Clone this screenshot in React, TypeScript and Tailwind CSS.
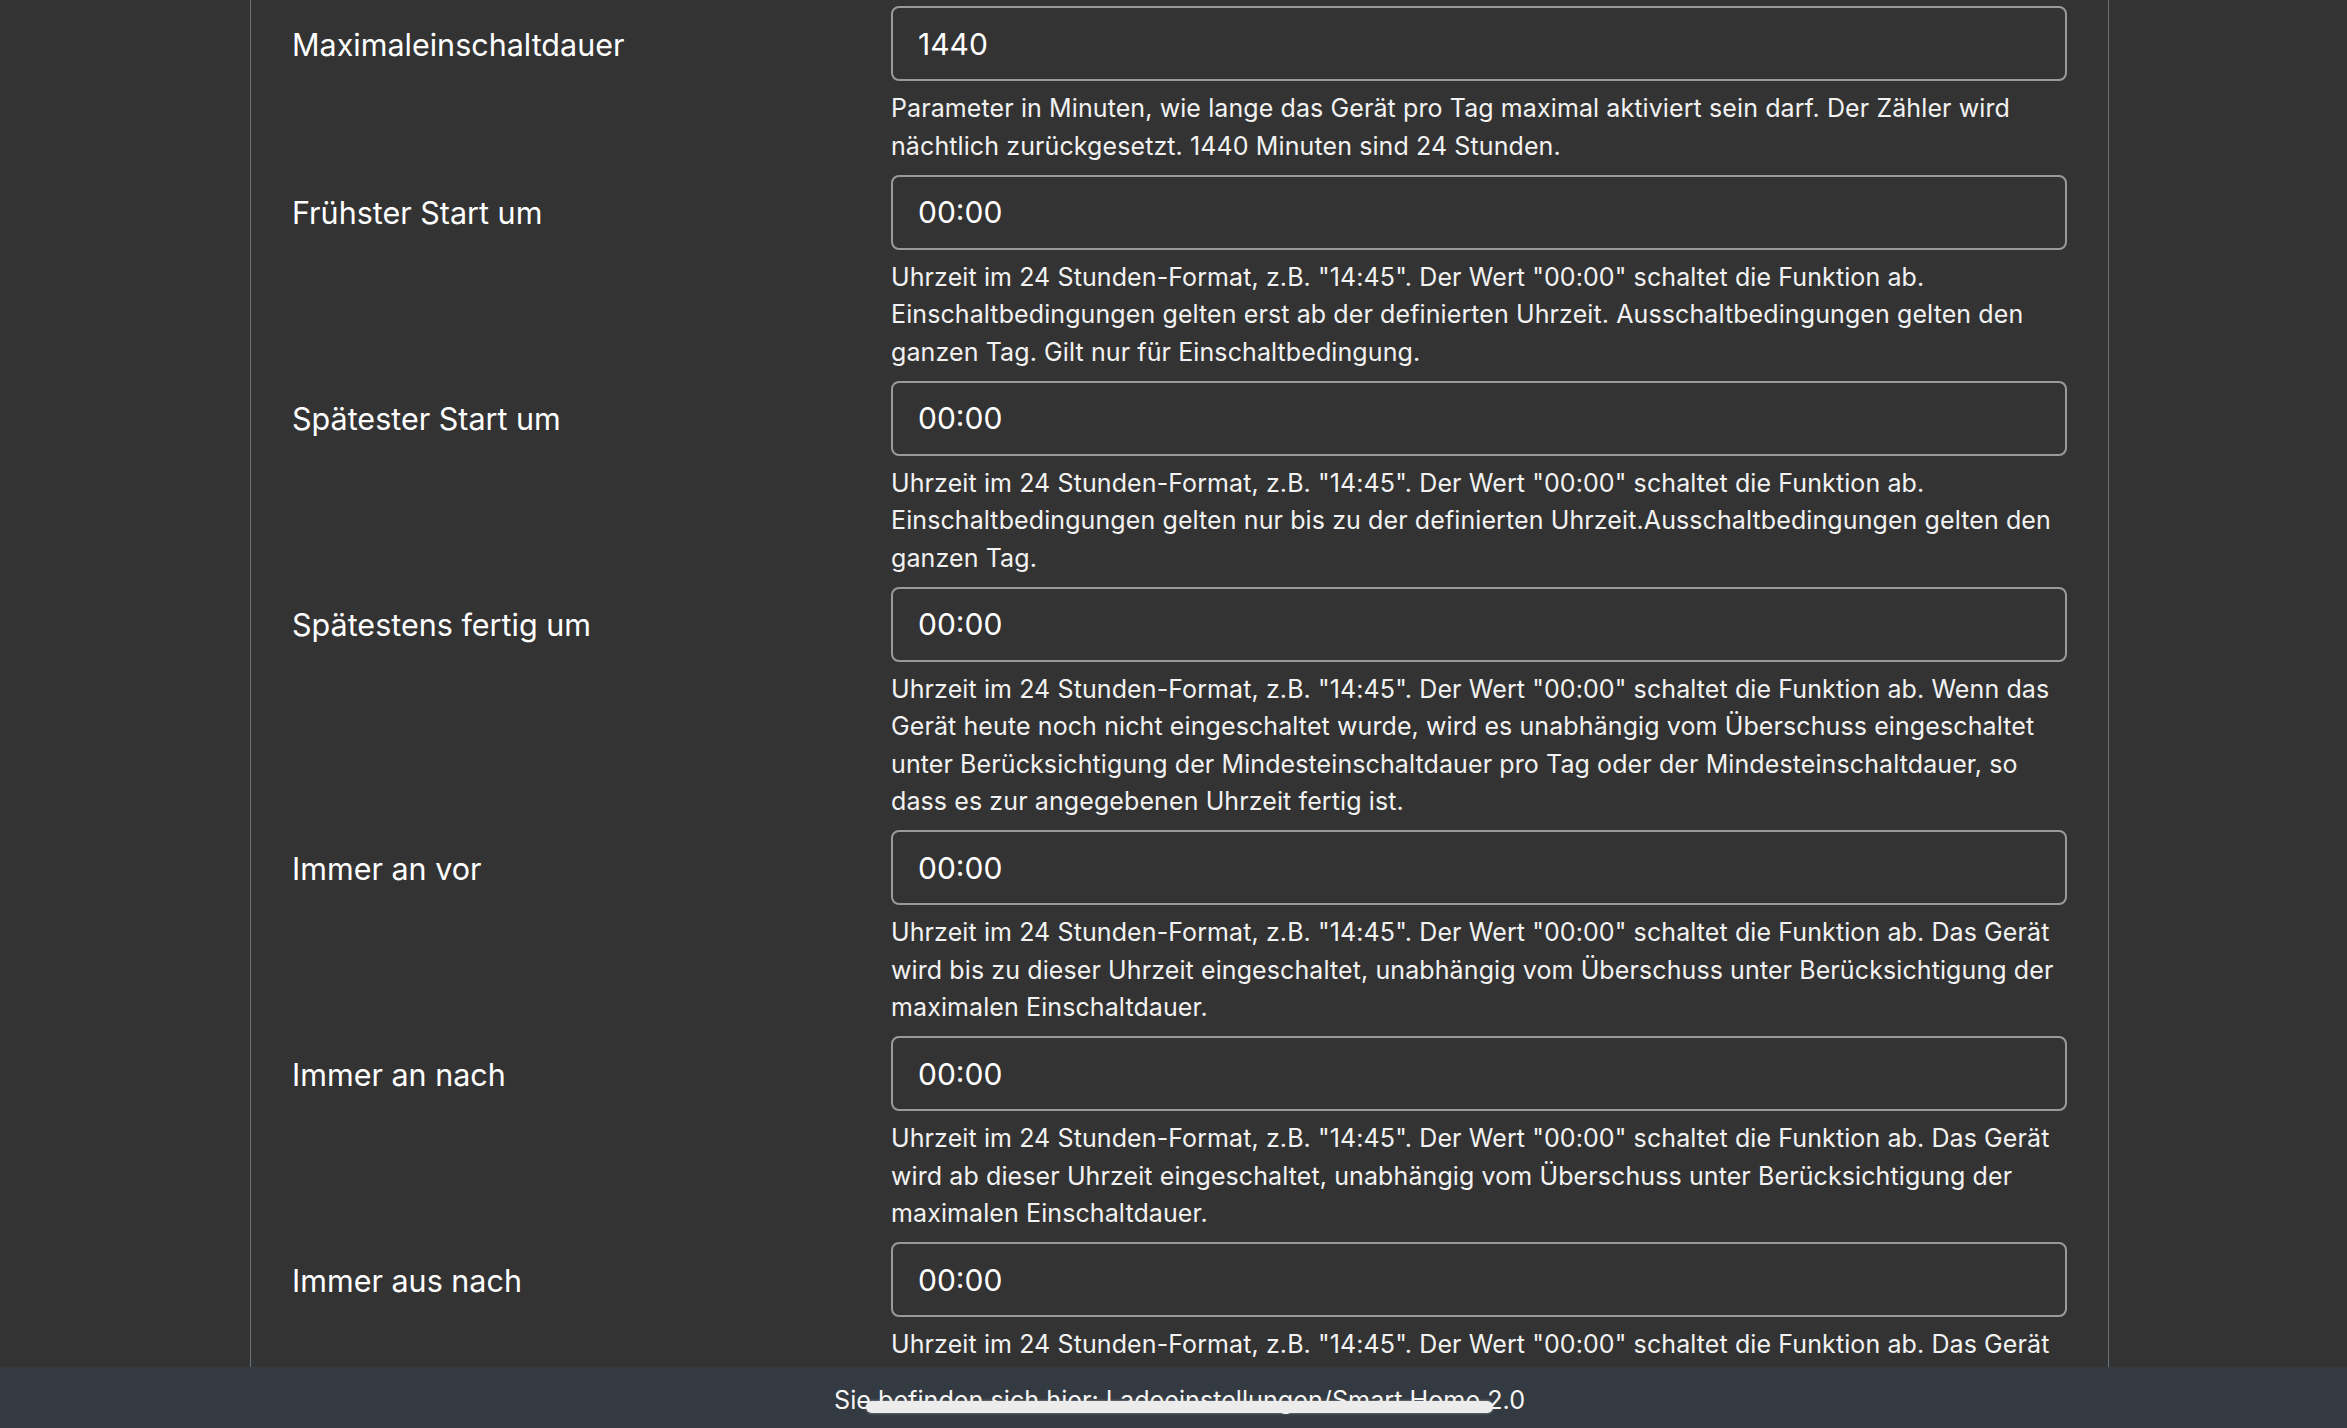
import React from 'react';

const font = { fontFamily: 'Inter, "Noto Sans", sans-serif' };

const timeHint = 'Uhrzeit im 24 Stunden-Format, z.B. "14:45". Der Wert "00:00" schaltet die Funktion ab.';

const fields = [
  {
    label: 'Maximaleinschaltdauer',
    value: '1440',
    help: 'Parameter in Minuten, wie lange das Gerät pro Tag maximal aktiviert sein darf. Der Zähler wird nächtlich zurückgesetzt. 1440 Minuten sind 24 Stunden.',
  },
  {
    label: 'Frühster Start um',
    value: '00:00',
    help: `${timeHint} Einschaltbedingungen gelten erst ab der definierten Uhrzeit. Ausschaltbedingungen gelten den ganzen Tag. Gilt nur für Einschaltbedingung.`,
  },
  {
    label: 'Spätester Start um',
    value: '00:00',
    help: `${timeHint} Einschaltbedingungen gelten nur bis zu der definierten Uhrzeit.Ausschaltbedingungen gelten den ganzen Tag.`,
  },
  {
    label: 'Spätestens fertig um',
    value: '00:00',
    help: `${timeHint} Wenn das Gerät heute noch nicht eingeschaltet wurde, wird es unabhängig vom Überschuss eingeschaltet unter Berücksichtigung der Mindesteinschaltdauer pro Tag oder der Mindesteinschaltdauer, so dass es zur angegebenen Uhrzeit fertig ist.`,
  },
  {
    label: 'Immer an vor',
    value: '00:00',
    help: `${timeHint} Das Gerät wird bis zu dieser Uhrzeit eingeschaltet, unabhängig vom Überschuss unter Berücksichtigung der maximalen Einschaltdauer.`,
  },
  {
    label: 'Immer an nach',
    value: '00:00',
    help: `${timeHint} Das Gerät wird ab dieser Uhrzeit eingeschaltet, unabhängig vom Überschuss unter Berücksichtigung der maximalen Einschaltdauer.`,
  },
  {
    label: 'Immer aus nach',
    value: '00:00',
    help: `${timeHint} Das Gerät wird ab dieser Uhrzeit ausgeschaltet, unabhängig vom Überschuss.`,
  },
];

export default function App() {
  return (
    <div className="relative h-[1428px] flex flex-col overflow-hidden bg-[#333333] text-white" style={font}>
      {/* Settings card */}
      <main className="flex-1 min-h-0 overflow-hidden">
        <div className="ml-[250px] w-[1859px] h-full border-x border-[#6c727a] px-[41px] pt-[6px]">
          {fields.map((f) => (
            <div key={f.label} className="grid grid-cols-[599px_1fr]">
              <label className="h-[75px] pt-[2px] flex items-center text-[30.5px]">{f.label}</label>
              <div className="pb-[9.5px]">
                <input
                  type="text"
                  defaultValue={f.value}
                  className="block w-full h-[75px] px-[25px] rounded-[8px] border-2 border-[#9a9a9a] bg-transparent text-[30px] text-white outline-none"
                  style={font}
                />
                <p className="mt-[9px] text-[25px] leading-[37.5px] tracking-[0.1px] text-[#f2f2f2]">{f.help}</p>
              </div>
            </div>
          ))}
        </div>
      </main>

      {/* Footer */}
      <footer className="h-[61px] shrink-0 bg-[#343a41] flex justify-center pt-[15px] pl-[12px]">
        <span className="text-[25.2px] leading-[37px] text-[#f5f5f5]">Sie befinden sich hier: Ladeeinstellungen/Smart Home 2.0</span>
      </footer>

      {/* Scroll indicator overlay */}
      <div className="absolute left-[866px] top-[1401px] w-[627px] h-[12px] rounded-full bg-[#ececec] shadow-[0_0_3px_rgba(255,255,255,0.5)]" />
    </div>
  );
}
